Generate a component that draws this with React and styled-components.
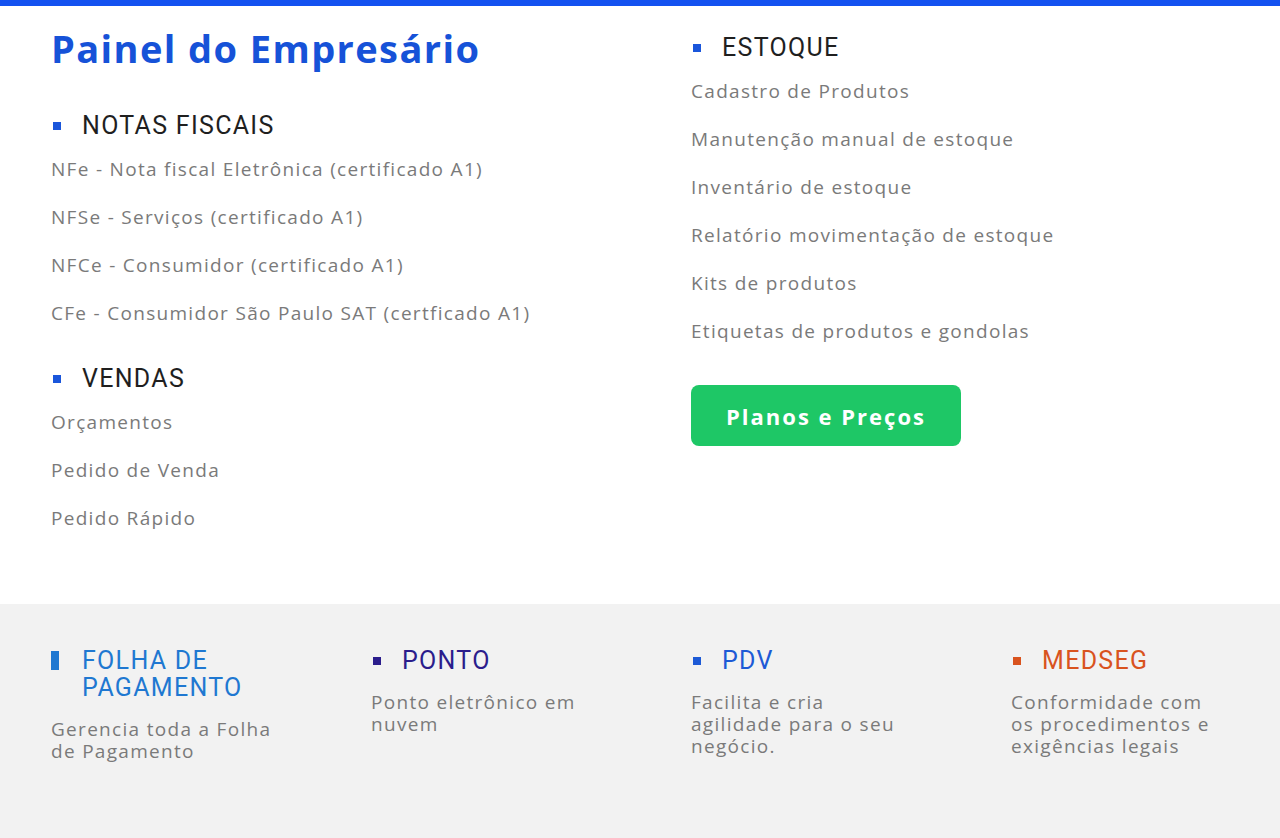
import React from 'react';
import styled, { createGlobalStyle } from 'styled-components';

const GlobalStyle = createGlobalStyle`
  body {
    margin: 0;
    background: #ffffff;
    font-family: "Open Sans", "Noto Sans", sans-serif;
  }
`;

const Page = styled.div`
  width: 1280px;
  min-height: 838px;
  border-top: 6px solid #1452f0;
  box-sizing: border-box;
  display: flex;
  flex-direction: column;
`;

const Main = styled.div`
  display: grid;
  grid-template-columns: 640px 640px;
  padding: 0 0 0 51px;
  height: 598px;
  box-sizing: border-box;
`;

const Column = styled.div`
  display: flex;
  flex-direction: column;
`;

const Title = styled.h1`
  margin: 22px 0 44px;
  font-family: "Open Sans", sans-serif;
  font-weight: 700;
  font-size: 38px;
  line-height: 40px;
  letter-spacing: 1.4px;
  color: #1652d8;
`;

const Section = styled.div`
  display: flex;
  flex-direction: column;
  margin-top: ${(p) => p.top || 0}px;
  margin-bottom: ${(p) => p.gap || 0}px;
`;

const Heading = styled.h2`
  display: flex;
  align-items: center;
  margin: 0;
  font-family: Roboto, sans-serif;
  font-weight: 400;
  font-size: 25px;
  line-height: 28px;
  letter-spacing: 1.3px;
  color: #1f1f1f;

  &::before {
    content: '';
    width: 8px;
    height: 8px;
    background: #1a56db;
    margin: 0 21px 0 2px;
  }
`;

const ItemList = styled.ul`
  list-style: none;
  margin: 5px 0 0;
  padding: 0;
`;

const Item = styled.li`
  font-size: 19px;
  line-height: 48px;
  height: 48px;
  letter-spacing: 1.3px;
  color: #7a7a7a;
`;

const Button = styled.a`
  display: inline-flex;
  align-items: center;
  justify-content: center;
  width: 270px;
  height: 61px;
  margin-top: 30px;
  border-radius: 8px;
  background: #1ec766;
  color: #ffffff;
  font-weight: 700;
  font-size: 22px;
  letter-spacing: 2px;
  text-decoration: none;
`;

const Footer = styled.div`
  background: #f2f2f2;
  flex: 1;
  display: grid;
  grid-template-columns: repeat(4, 320px);
  padding: 43px 0 0 51px;
  box-sizing: border-box;
`;

const Product = styled.div`
  display: flex;
  flex-direction: column;
`;

const ProductName = styled.h3`
  position: relative;
  margin: 0 0 17px;
  padding-left: 31px;
  font-family: Roboto, sans-serif;
  font-weight: 400;
  font-size: 25px;
  line-height: 27px;
  letter-spacing: 1.3px;
  color: ${(p) => p.color};
  width: 220px;

  &::before {
    content: '';
    position: absolute;
    left: ${(p) => (p.tall ? 0 : 2)}px;
    top: ${(p) => (p.tall ? 4 : 10)}px;
    width: 8px;
    height: ${(p) => (p.tall ? 19 : 8)}px;
    background: ${(p) => p.color};
  }
`;

const ProductText = styled.p`
  margin: 0;
  white-space: nowrap;
  font-size: 19px;
  line-height: 22px;
  letter-spacing: 1.3px;
  color: #7a7a7a;
`;

const notas = [
  'NFe - Nota fiscal Eletrônica (certificado A1)',
  'NFSe - Serviços (certificado A1)',
  'NFCe - Consumidor (certificado A1)',
  'CFe - Consumidor São Paulo SAT (certficado A1)',
];

const vendas = ['Orçamentos', 'Pedido de Venda', 'Pedido Rápido'];

const estoque = [
  'Cadastro de Produtos',
  'Manutenção manual de estoque',
  'Inventário de estoque',
  'Relatório movimentação de estoque',
  'Kits de produtos',
  'Etiquetas de produtos e gondolas',
];

const products = [
  { name: 'FOLHA DE PAGAMENTO', color: '#1f78d1', tall: true, lines: ['Gerencia toda a Folha', 'de Pagamento'] },
  { name: 'PONTO', color: '#2b1d8c', lines: ['Ponto eletrônico em', 'nuvem'] },
  { name: 'PDV', color: '#1d5ad6', lines: ['Facilita e cria', 'agilidade para o seu', 'negócio.'] },
  { name: 'MEDSEG', color: '#d9531e', lines: ['Conformidade com', 'os procedimentos e', 'exigências legais'] },
];

const App = () => (
  <>
    <GlobalStyle />
    <Page>
      <Main>
        <Column>
          <Title>Painel do Empresário</Title>
          <Section gap={28}>
            <Heading>NOTAS FISCAIS</Heading>
            <ItemList>
              {notas.map((n) => (
                <Item key={n}>{n}</Item>
              ))}
            </ItemList>
          </Section>
          <Section>
            <Heading>VENDAS</Heading>
            <ItemList>
              {vendas.map((n) => (
                <Item key={n}>{n}</Item>
              ))}
            </ItemList>
          </Section>
        </Column>
        <Column>
          <Section top={28}>
            <Heading>ESTOQUE</Heading>
            <ItemList>
              {estoque.map((n) => (
                <Item key={n}>{n}</Item>
              ))}
            </ItemList>
          </Section>
          <div>
            <Button href="#">Planos e Preços</Button>
          </div>
        </Column>
      </Main>
      <Footer>
        {products.map((p) => (
          <Product key={p.name}>
            <ProductName color={p.color} tall={p.tall}>
              {p.name}
            </ProductName>
            <ProductText>
              {p.lines.map((l, i) => (
                <React.Fragment key={l}>
                  {i > 0 && <br />}
                  {l}
                </React.Fragment>
              ))}
            </ProductText>
          </Product>
        ))}
      </Footer>
    </Page>
  </>
);

export default App;
